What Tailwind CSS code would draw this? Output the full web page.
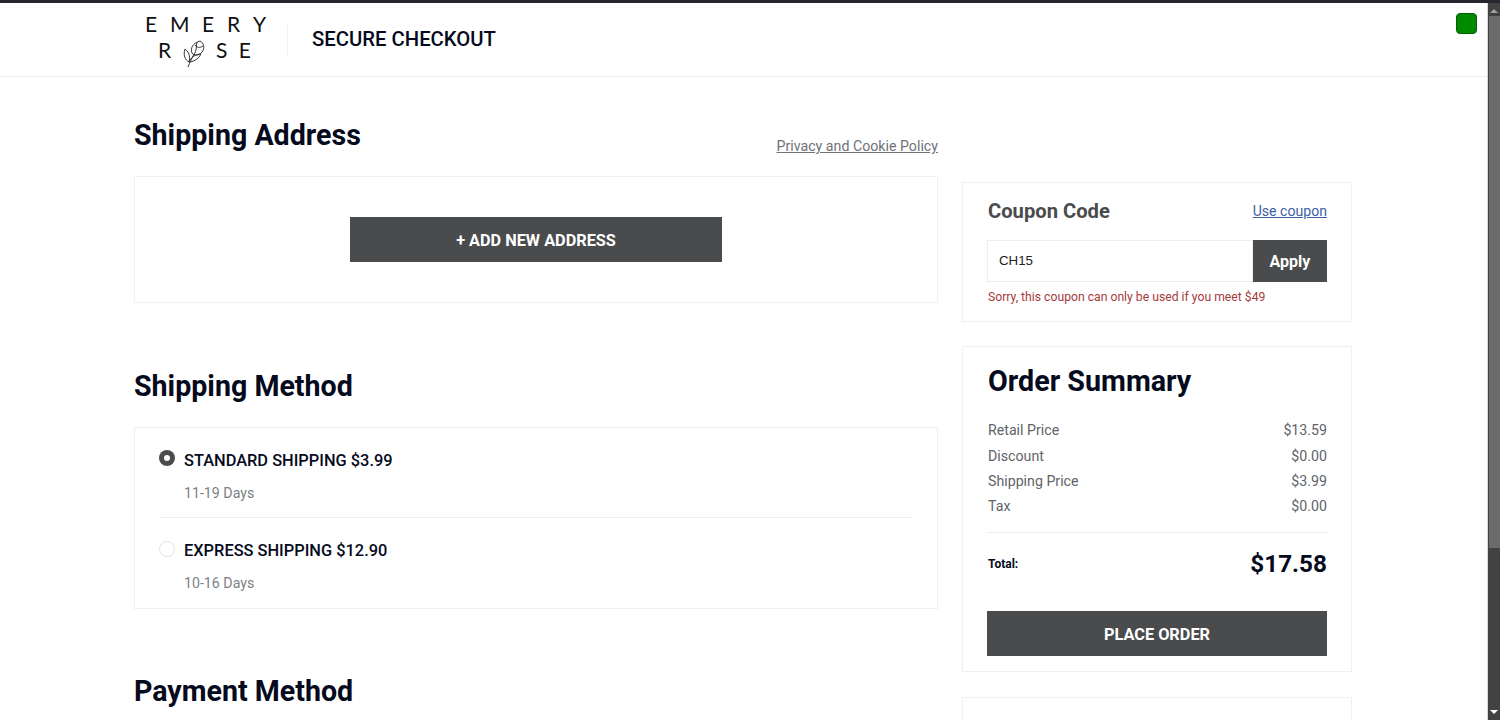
<!DOCTYPE html>
<html lang="en">
<head>
  <meta charset="UTF-8">
  <title>Secure Checkout - Emery Rose</title>
  <script src="https://cdn.jsdelivr.net/npm/@tailwindcss/browser@4"></script>
</head>
<body class="h-[720px] overflow-hidden bg-white font-['Roboto',sans-serif] text-[#050a1c]">
  <!-- Window top edge -->
  <div class="h-[3px] bg-[#26262e]"></div>

  <div class="flex h-[717px]">
    <div class="relative flex-1 overflow-hidden">
      <!-- Header -->
      <header class="flex h-[74px] items-start border-b border-[#eeeeee] pl-[145px]">
        <div class="w-[121px] pt-[12px] font-['Lato',sans-serif] text-[21px] leading-[18px] text-[#111111]">
          <div class="flex justify-between"><span>E</span><span>M</span><span>E</span><span>R</span><span>Y</span></div>
          <div class="mt-[8px] flex items-center justify-between pr-[15px] pl-[13px]">
            <span>R</span>
            <svg class="-my-3 h-[27px] w-[22px] translate-y-[3px]" viewBox="0 0 22 27" fill="none" stroke="#222222" stroke-width="0.9">
              <path d="M9 13C7 8 10 3 17 1C21 3 22 8 19 12C16 16 11 16 9 13Z"/>
              <path d="M12 5C14 8 17 8 20 6M14 2C13 6 14 10 11 15"/>
              <path d="M6 22C2 20 0 15 2 9C5 11 8 16 6 22Z"/>
              <path d="M6 22C9 22 15 20 18 14C13 14 8 17 6 22Z"/>
              <path d="M11 14C9 18 7 22 5 27"/>
            </svg>
            <span>S</span>
            <span>E</span>
          </div>
        </div>
        <div class="ml-[21px] mt-[20px] h-[34px] border-l border-[#f0f0f0]"></div>
        <div class="ml-[24px] mt-[22px] text-[20.3px] leading-[28px] font-medium">SECURE CHECKOUT</div>
      </header>

      <!-- Status square over the page -->
      <div class="absolute top-[10px] right-[10px] h-[21px] w-[21px] rounded-[4px] border border-[#0b5a0b] bg-[#008a00]"></div>

      <main class="ml-[134px] flex w-[1218px] gap-[24px]">
        <!-- Left column -->
        <div class="w-[804px]">
          <div class="flex h-[99px] items-start justify-between">
            <h2 class="mt-[40px] text-[28.6px] leading-[36px] font-bold">Shipping Address</h2>
            <a class="mt-[59px] text-[14.2px] leading-[20px] text-[#6f7378] underline">Privacy and Cookie Policy</a>
          </div>
          <section class="flex h-[127px] items-start justify-center border border-[#f0f0f0] pt-[40px]">
            <button class="h-[45px] w-[372px] bg-[#4a4b4d] pt-[4px] text-[16.3px] font-bold text-white">+ ADD NEW ADDRESS</button>
          </section>

          <h2 class="mt-[65px] text-[28.6px] leading-[36px] font-bold">Shipping Method</h2>
          <section class="mt-[23px] h-[182px] border border-[#f0f0f0] px-[24px]">
            <div class="flex h-[90px] gap-[9px] border-b border-[#eeeeee] pt-[21px]">
              <span class="mt-px flex h-[16px] w-[16px] items-center justify-center rounded-full bg-[#4a4b4d]"><span class="h-[6px] w-[6px] rounded-full bg-white"></span></span>
              <div>
                <div class="mt-px text-[16.4px] leading-[22px] font-medium">STANDARD SHIPPING $3.99</div>
                <div class="mt-[10px] text-[14.2px] leading-[22px] text-[#7b7f85]">11-19 Days</div>
              </div>
            </div>
            <div class="flex gap-[9px] pt-[22px]">
              <span class="mt-px h-[16px] w-[16px] rounded-full border border-[#e4e4e4]"></span>
              <div>
                <div class="text-[16.4px] leading-[22px] font-medium">EXPRESS SHIPPING $12.90</div>
                <div class="mt-[10px] text-[14.2px] leading-[22px] text-[#7b7f85]">10-16 Days</div>
              </div>
            </div>
          </section>

          <h2 class="mt-[64px] text-[28.6px] leading-[36px] font-bold">Payment Method</h2>
        </div>

        <!-- Right column -->
        <aside class="w-[390px] pt-[105px]">
          <section class="h-[140px] border border-[#f0f0f0] pt-[16px] pr-[24px] pl-[25px]">
            <div class="flex items-center justify-between">
              <h3 class="text-[20.2px] leading-[24px] font-bold text-[#4a4b4d]">Coupon Code</h3>
              <a class="text-[14.1px] leading-[20px] text-[#3f5fa5] underline">Use coupon</a>
            </div>
            <div class="mt-[17px] -ml-px flex h-[42px] w-[340px]">
              <div class="flex flex-1 items-center border border-[#eeeeee] pl-[11px] font-['Liberation_Sans',sans-serif] text-[13.3px] text-[#222222]">CH15</div>
              <button class="w-[74px] bg-[#4a4b4d] pt-[2px] text-[16px] font-bold text-white">Apply</button>
            </div>
            <p class="mt-[6px] text-[12.2px] leading-[18px] text-[#a63a3c]">Sorry, this coupon can only be used if you meet $49</p>
          </section>

          <section class="mt-[24px] h-[326px] border border-[#f0f0f0] pt-[16px] pr-[24px] pl-[25px]">
            <h2 class="text-[28.7px] leading-[36px] font-bold">Order Summary</h2>
            <dl class="mt-[21px] border-b border-[#eeeeee] pb-[16px] text-[14.2px] leading-[20px] text-[#5f6368]">
              <div class="flex justify-between"><dt>Retail Price</dt><dd>$13.59</dd></div>
              <div class="mt-[6px] flex justify-between"><dt>Discount</dt><dd>$0.00</dd></div>
              <div class="mt-[5px] flex justify-between"><dt>Shipping Price</dt><dd>$3.99</dd></div>
              <div class="mt-[5px] flex justify-between"><dt>Tax</dt><dd>$0.00</dd></div>
            </dl>
            <div class="mt-[15px] flex items-center justify-between">
              <span class="text-[12px] font-bold">Total:</span>
              <span class="text-[24.3px] leading-[32px] font-bold">$17.58</span>
            </div>
            <button class="mt-[31px] -ml-px h-[45px] w-[340px] bg-[#4a4b4d] pt-[4px] text-[16.3px] font-bold text-white">PLACE ORDER</button>
          </section>

          <section class="mt-[25px] h-[60px] border border-[#f0f0f0]"></section>
        </aside>
      </main>
    </div>

    <!-- Scrollbar -->
    <div class="flex w-[13px] flex-col items-center border-l border-[#d8d8d8] bg-[#424242]">
      <div class="mt-[6px] h-0 w-0 border-x-[4px] border-b-[4px] border-x-transparent border-b-[#a0a0a0]"></div>
      <div class="mt-[3px] h-[532px] w-[11px] bg-[#6b6b6b]"></div>
      <div class="mt-auto mb-[6px] h-0 w-0 border-x-[4px] border-t-[4px] border-x-transparent border-t-white"></div>
    </div>
  </div>
</body>
</html>
